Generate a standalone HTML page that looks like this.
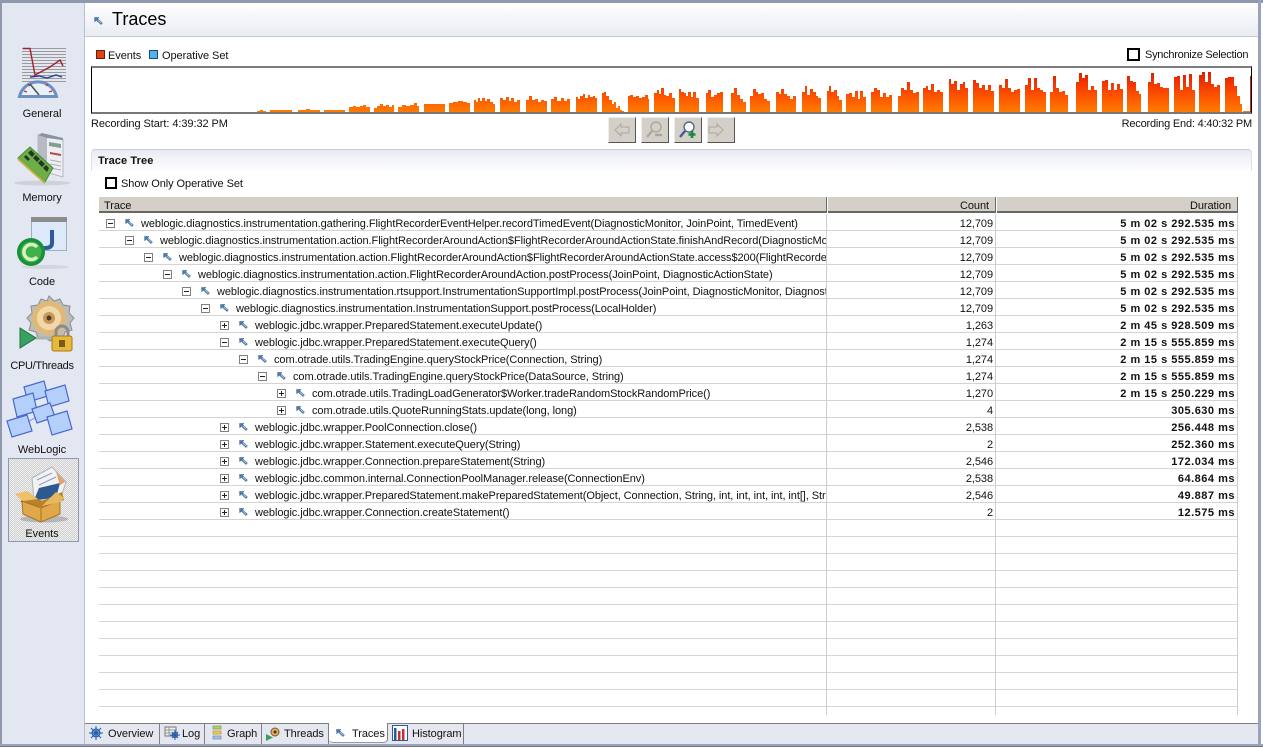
<!DOCTYPE html>
<html><head><meta charset="utf-8"><title>Traces</title>
<style>
html,body{margin:0;padding:0;background:#fff}
#p{position:relative;width:1263px;height:747px;overflow:hidden;background:#fff;font:11px/14px "Liberation Sans",sans-serif;color:#111;letter-spacing:-.07px}
#p div,#p svg{position:absolute}
.t{white-space:nowrap}
.l{width:84px;left:0;text-align:center;height:14px}
.r{left:99px;width:1138px;height:16px;border-bottom:1px solid #d4d4d4}
.r svg{margin:2px 0 0 1px}
.n{left:0;top:3px;width:727px;height:14px;overflow:hidden;white-space:nowrap}
.n span{position:absolute;top:0;white-space:nowrap}
.c{right:244px;top:3px;width:160px;text-align:right}
.d{right:2px;top:3px;width:230px;text-align:right;font-weight:bold;letter-spacing:.5px}
.b{width:26px;height:24px;background:#d4d0c8;border-right:1px solid #555;border-bottom:1px solid #555;border-top:1px solid #eee;border-left:1px solid #eee}
.x{width:7px;height:7px;border:1px solid #808080;background:#fff;top:5px}
.x:before{content:"";position:absolute;left:1px;top:3px;width:5px;height:1px;background:#222}
.x.p:after{content:"";position:absolute;left:3px;top:1px;width:1px;height:5px;background:#222}
.tb{top:723px;height:21px;border-top:1px solid #808080;border-right:1px solid #808080;background:#e4e7ef;box-sizing:border-box}
.tb b{position:absolute;top:3px;font-weight:normal;white-space:nowrap}
</style></head><body><div id="p">

<svg width="0" height="0" style="left:0;top:0"><defs>
<symbol id="ar" viewBox="0 0 9 8"><path d="M0.5 0.5H5L3.7 1.8 8.5 6 7 7.6 2.3 3.2 0.8 4.8Z" fill="#4f7cae" stroke="#2c5688" stroke-width=".5"/><path d="M4 3l3.5 3.2" stroke="#a9c3df" stroke-width="1"/></symbol>
<linearGradient id="og" gradientUnits="userSpaceOnUse" x1="0" y1="72" x2="0" y2="113"><stop offset="0" stop-color="#e41c00"/><stop offset=".5" stop-color="#fb4a00"/><stop offset="1" stop-color="#ff7f00"/></linearGradient>
</defs></svg>

<!-- window chrome -->
<div style="left:0;top:0;width:1263px;height:3px;background:#8f98ac"></div>
<div style="left:0;top:0;width:2px;height:747px;background:#8f98ac"></div>
<div style="left:2px;top:3px;width:82px;height:741px;background:#e3e7f1"></div>
<div style="left:84px;top:3px;width:1px;height:741px;background:#b9bfcc"></div>

<!-- header -->
<div style="left:85px;top:3px;width:1173px;height:33px;background:linear-gradient(#fff,#e9ecf3);border-bottom:1px solid #c3c8d4"></div>
<svg style="left:94px;top:17px" width="9" height="8"><use href="#ar"/></svg>
<div class="t" style="left:112px;top:9px;font-size:18px;line-height:20px;color:#000;letter-spacing:0">Traces</div>

<!-- legend -->
<div style="left:96px;top:50px;width:7px;height:7px;background:#e8400c;border:1px solid #5a2010"></div>
<div class="t" style="left:108px;top:49px">Events</div>
<div style="left:149px;top:50px;width:7px;height:7px;background:#4fb4ee;border:1px solid #1f4a70"></div>
<div class="t" style="left:162px;top:49px">Operative Set</div>
<div style="left:1127px;top:48px;width:9px;height:9px;border:2px solid #000;background:#fff"></div>
<div class="t" style="left:1145px;top:48px;letter-spacing:-.27px">Synchronize Selection</div>

<!-- chart -->
<svg style="left:0;top:0" width="1263" height="120"><path fill="url(#og)" d="
M254 113V112h3V111h3V110h3V111h3V113Z
M270 113V110h22V113Z
M298 113V110h8V109h4V110h10V113Z
M324 113V110h21V113Z
M349 113V107h4V106h3V107h4V106h3V105h3V107h4V113Z
M374 113V108h3V106h3V104h3V106h3V105h3V107h3V105h2V113Z
M398 113V107h4V105h4V106h4V105h4V103h3V106h2V113Z
M424 113V104h21V113Z
M449 113V103h4V102h5V101h5V102h4V103h3V113Z
M474 113V100h2V102h2V98h2V101h2V98h3V101h2V99h3V102h3V104h2V113Z
M500 113V98h3V100h3V97h3V101h2V98h3V102h3V100h3V113Z
M526 113V100h3V96h3V100h3V99h3V102h3V100h3V101h3V113Z
M551 113V99h3V97h3V101h4V98h3V101h3V99h3V113Z
M576 113V97h2V99h2V96h3V94h2V98h3V95h2V97h3V96h2V98h2V113Z
M602 113V93h2V92h2V96h3V100h3V104h2V102h2V108h2V106h2V110h2V111h2V113Z
M628 113V96h2V95h3V97h3V96h3V98h3V97h3V95h3V99h1V113Z
M654 113V93h3V90h2V94h2V88h3V95h2V96h3V93h3V98h3V113Z
M679 113V89h2V92h3V93h2V96h2V92h3V97h2V92h3V98h3V113Z
M706 113V93h2V90h3V97h3V95h3V93h3V92h3V113Z
M731 113V93h3V88h3V95h3V99h3V102h3V113Z
M750 113V96h3V89h3V92h2V94h3V93h3V99h3V101h3V113Z
M776 113V92h3V94h2V89h3V94h3V96h3V99h3V96h3V113Z
M802 113V92h3V86h2V95h3V89h3V92h3V96h2V98h3V113Z
M827 113V91h2V86h2V92h3V90h3V96h2V100h3V113Z
M846 113V94h3V93h3V97h3V91h3V99h2V91h3V97h3V113Z
M871 113V92h3V88h3V90h3V97h3V93h3V97h3V95h3V113Z
M898 113V96h3V88h3V90h3V82h3V90h3V93h3V92h3V113Z
M923 113V88h3V86h2V90h3V84h3V92h3V90h3V92h3V113Z
M949 113V79h2V84h3V81h3V90h3V84h3V82h2V88h3V113Z
M973 113V80h3V83h3V88h3V85h3V90h3V85h3V91h3V113Z
M999 113V85h3V88h3V79h3V88h3V92h3V90h3V89h3V113Z
M1025 113V85h3V78h3V90h3V78h3V88h3V90h3V92h3V113Z
M1050 113V92h3V76h3V88h3V92h3V91h3V95h3V113Z
M1076 113V82h3V73h3V78h3V75h3V90h3V86h3V90h3V113Z
M1102 113V81h3V80h3V90h3V83h3V90h3V84h3V89h3V113Z
M1127 113V76h3V81h3V82h3V91h3V94h2V113Z
M1148 113V82h3V73h3V84h3V83h3V87h3V88h3V88h3V113Z
M1174 113V77h3V76h3V90h3V75h3V87h3V74h3V90h3V113Z
M1199 113V75h3V72h3V82h3V72h3V84h3V87h3V85h3V113Z
M1225 113V78h3V77h3V77h3V86h3V96h3V104h2V113Z
M1243 113V111h7V113Z"/><rect x="1250" y="76" width="1.5" height="37" fill="#c42a10"/></svg>
<div style="left:91px;top:66px;width:1159px;height:44px;border-top:2px solid #7d7d7d;border-bottom:2px solid #777;border-left:1px solid #000;border-right:1px solid #000"></div>

<div class="t" style="left:91px;top:117px">Recording Start: 4:39:32 PM</div>
<div class="t" style="right:11px;top:117px;letter-spacing:-.19px">Recording End: 4:40:32 PM</div>

<!-- buttons -->
<div class="b" style="left:608px;top:117px"></div>
<div class="b" style="left:641px;top:117px"></div>
<div class="b" style="left:674px;top:117px"></div>
<div class="b" style="left:707px;top:117px"></div>
<svg style="left:608px;top:117px" width="130" height="27" fill="none">
<path d="M7 13l6-6v3h8v6h-8v3z" stroke="#aca9a2"/>
<path d="M112 13l-6-6v3h-8v6h8v3z" stroke="#aca9a2" transform="translate(3 0)"/>
<circle cx="48" cy="10" r="5" stroke="#aca9a2" stroke-width="1.4"/><path d="M44 14l-5 6" stroke="#aca9a2" stroke-width="2.4"/><path d="M47 18h7" stroke="#a8a59e" stroke-width="2.4"/>
<circle cx="81" cy="10" r="5" fill="#fff" stroke="#54678c" stroke-width="1.4"/><path d="M77 14l-5 6" stroke="#3f5d94" stroke-width="2.4"/><path d="M84 14v7M80.500 17.500h7" stroke="#168a3a" stroke-width="2.6"/>
</svg>

<!-- trace tree section -->
<div style="left:91px;top:149px;width:1159px;height:21px;background:linear-gradient(#e8ebf2,#fafbfc 85%,#fff);border-top:1px solid #c3c8d4;border-left:1px solid #dde0e8;border-right:1px solid #dde0e8;border-radius:4px 4px 0 0"></div>
<div class="t" style="left:98px;top:154px;font-weight:bold;letter-spacing:.1px">Trace Tree</div>
<div style="left:105px;top:177px;width:8px;height:8px;border:2px solid #000;background:#fff"></div>
<div class="t" style="left:121px;top:177px">Show Only Operative Set</div>

<!-- table header -->
<div style="left:99px;top:197px;width:1138px;height:14px;background:#d4d0c8;border-bottom:2px solid #666"></div>
<div style="left:826px;top:197px;width:1px;height:16px;background:#666"></div><div style="left:827px;top:197px;width:1px;height:16px;background:#fff"></div>
<div style="left:995px;top:197px;width:1px;height:16px;background:#666"></div><div style="left:996px;top:197px;width:1px;height:16px;background:#fff"></div>
<div style="left:1237px;top:197px;width:1px;height:16px;background:#666"></div>
<div class="t" style="left:104px;top:199px">Trace</div>
<div class="t" style="right:274px;top:199px">Count</div>
<div class="t" style="right:32px;top:199px">Duration</div>

<!-- rows -->
<div class="r" style="top:214px"><div class="n"><span style="left:42px">weblogic.diagnostics.instrumentation.gathering.FlightRecorderEventHelper.recordTimedEvent(DiagnosticMonitor, JoinPoint, TimedEvent)</span></div><div class="x" style="left:7px"></div><svg style="left:25px;top:3px" width="9" height="8"><use href="#ar"/></svg><div class="c">12,709</div><div class="d">5 m 02 s 292.535 ms</div></div>
<div class="r" style="top:231px"><div class="n"><span style="left:61px">weblogic.diagnostics.instrumentation.action.FlightRecorderAroundAction$FlightRecorderAroundActionState.finishAndRecord(DiagnosticMonitor, JoinPoint)</span></div><div class="x" style="left:26px"></div><svg style="left:44px;top:3px" width="9" height="8"><use href="#ar"/></svg><div class="c">12,709</div><div class="d">5 m 02 s 292.535 ms</div></div>
<div class="r" style="top:248px"><div class="n"><span style="left:80px">weblogic.diagnostics.instrumentation.action.FlightRecorderAroundAction$FlightRecorderAroundActionState.access$200(FlightRecorderAroundAction)</span></div><div class="x" style="left:45px"></div><svg style="left:63px;top:3px" width="9" height="8"><use href="#ar"/></svg><div class="c">12,709</div><div class="d">5 m 02 s 292.535 ms</div></div>
<div class="r" style="top:265px"><div class="n"><span style="left:99px">weblogic.diagnostics.instrumentation.action.FlightRecorderAroundAction.postProcess(JoinPoint, DiagnosticActionState)</span></div><div class="x" style="left:64px"></div><svg style="left:82px;top:3px" width="9" height="8"><use href="#ar"/></svg><div class="c">12,709</div><div class="d">5 m 02 s 292.535 ms</div></div>
<div class="r" style="top:282px"><div class="n"><span style="left:118px">weblogic.diagnostics.instrumentation.rtsupport.InstrumentationSupportImpl.postProcess(JoinPoint, DiagnosticMonitor, DiagnosticAction)</span></div><div class="x" style="left:83px"></div><svg style="left:101px;top:3px" width="9" height="8"><use href="#ar"/></svg><div class="c">12,709</div><div class="d">5 m 02 s 292.535 ms</div></div>
<div class="r" style="top:299px"><div class="n"><span style="left:137px">weblogic.diagnostics.instrumentation.InstrumentationSupport.postProcess(LocalHolder)</span></div><div class="x" style="left:102px"></div><svg style="left:120px;top:3px" width="9" height="8"><use href="#ar"/></svg><div class="c">12,709</div><div class="d">5 m 02 s 292.535 ms</div></div>
<div class="r" style="top:316px"><div class="n"><span style="left:156px">weblogic.jdbc.wrapper.PreparedStatement.executeUpdate()</span></div><div class="x p" style="left:121px"></div><svg style="left:139px;top:3px" width="9" height="8"><use href="#ar"/></svg><div class="c">1,263</div><div class="d">2 m 45 s 928.509 ms</div></div>
<div class="r" style="top:333px"><div class="n"><span style="left:156px">weblogic.jdbc.wrapper.PreparedStatement.executeQuery()</span></div><div class="x" style="left:121px"></div><svg style="left:139px;top:3px" width="9" height="8"><use href="#ar"/></svg><div class="c">1,274</div><div class="d">2 m 15 s 555.859 ms</div></div>
<div class="r" style="top:350px"><div class="n"><span style="left:175px">com.otrade.utils.TradingEngine.queryStockPrice(Connection, String)</span></div><div class="x" style="left:140px"></div><svg style="left:158px;top:3px" width="9" height="8"><use href="#ar"/></svg><div class="c">1,274</div><div class="d">2 m 15 s 555.859 ms</div></div>
<div class="r" style="top:367px"><div class="n"><span style="left:194px">com.otrade.utils.TradingEngine.queryStockPrice(DataSource, String)</span></div><div class="x" style="left:159px"></div><svg style="left:177px;top:3px" width="9" height="8"><use href="#ar"/></svg><div class="c">1,274</div><div class="d">2 m 15 s 555.859 ms</div></div>
<div class="r" style="top:384px"><div class="n"><span style="left:213px">com.otrade.utils.TradingLoadGenerator$Worker.tradeRandomStockRandomPrice()</span></div><div class="x p" style="left:178px"></div><svg style="left:196px;top:3px" width="9" height="8"><use href="#ar"/></svg><div class="c">1,270</div><div class="d">2 m 15 s 250.229 ms</div></div>
<div class="r" style="top:401px"><div class="n"><span style="left:213px">com.otrade.utils.QuoteRunningStats.update(long, long)</span></div><div class="x p" style="left:178px"></div><svg style="left:196px;top:3px" width="9" height="8"><use href="#ar"/></svg><div class="c">4</div><div class="d">305.630 ms</div></div>
<div class="r" style="top:418px"><div class="n"><span style="left:156px">weblogic.jdbc.wrapper.PoolConnection.close()</span></div><div class="x p" style="left:121px"></div><svg style="left:139px;top:3px" width="9" height="8"><use href="#ar"/></svg><div class="c">2,538</div><div class="d">256.448 ms</div></div>
<div class="r" style="top:435px"><div class="n"><span style="left:156px">weblogic.jdbc.wrapper.Statement.executeQuery(String)</span></div><div class="x p" style="left:121px"></div><svg style="left:139px;top:3px" width="9" height="8"><use href="#ar"/></svg><div class="c">2</div><div class="d">252.360 ms</div></div>
<div class="r" style="top:452px"><div class="n"><span style="left:156px">weblogic.jdbc.wrapper.Connection.prepareStatement(String)</span></div><div class="x p" style="left:121px"></div><svg style="left:139px;top:3px" width="9" height="8"><use href="#ar"/></svg><div class="c">2,546</div><div class="d">172.034 ms</div></div>
<div class="r" style="top:469px"><div class="n"><span style="left:156px">weblogic.jdbc.common.internal.ConnectionPoolManager.release(ConnectionEnv)</span></div><div class="x p" style="left:121px"></div><svg style="left:139px;top:3px" width="9" height="8"><use href="#ar"/></svg><div class="c">2,538</div><div class="d">64.864 ms</div></div>
<div class="r" style="top:486px"><div class="n"><span style="left:156px">weblogic.jdbc.wrapper.PreparedStatement.makePreparedStatement(Object, Connection, String, int, int, int, int, int[], String[])</span></div><div class="x p" style="left:121px"></div><svg style="left:139px;top:3px" width="9" height="8"><use href="#ar"/></svg><div class="c">2,546</div><div class="d">49.887 ms</div></div>
<div class="r" style="top:503px"><div class="n"><span style="left:156px">weblogic.jdbc.wrapper.Connection.createStatement()</span></div><div class="x p" style="left:121px"></div><svg style="left:139px;top:3px" width="9" height="8"><use href="#ar"/></svg><div class="c">2</div><div class="d">12.575 ms</div></div>

<!-- empty row lines and column lines -->
<svg style="left:99px;top:210px" width="1140" height="506">
<path stroke="#d8d8d2" fill="none" d="M0 326.500H1138M0 343.500H1138M0 360.500H1138M0 377.500H1138M0 394.500H1138M0 411.500H1138M0 428.500H1138M0 445.500H1138M0 462.500H1138M0 479.500H1138M0 496.500H1138"/>
<path stroke="#cfcfc9" fill="none" d="M727.500 4V505M896.500 4V505M1138.500 4V505"/>
</svg>

<!-- sidebar icons (absolute page coordinates) -->
<svg style="left:0;top:0" width="84" height="560">
<!-- General -->
<path stroke="#9a9a9a" fill="none" d="M22 48.500H66M22 51.500H66M22 54.500H66M22 57.500H66M22 60.500H66M22 63.500H66M22 66.500H66M22 69.500H66M22 72.500H66M22 75.500H66M22 78.500H66M22 81.500H66"/>
<path d="M23 48.500H30L35 75 50 67 60 60 63 66" fill="none" stroke="#a5202a" stroke-width="1.400"/>
<path d="M30 77l9-1 8 2 9-3 6 2" fill="none" stroke="#2a3f9a" stroke-width="1.400"/>
<path d="M19.500 96.500A19 19 0 0 1 56.500 96.500Z" fill="#e8f0fa" stroke="#6d90c4" stroke-width="3"/>
<path d="M30 84l9 11" stroke="#555" stroke-width="1.600"/>
<path d="M24 91l3 1M28 84l2 2M48 84l-2 2M52 91l-3 1" stroke="#b33" stroke-width="1.200"/>
<!-- Memory -->
<ellipse cx="42" cy="183" rx="28" ry="2.500" fill="#cdd1da"/>
<path d="M38 135L63 140V177L38 170Z" fill="#eceef2" stroke="#b4b9c3"/><path d="M38 135L47 138V173L38 170Z" fill="#b6bbc6"/><path d="M38 135L42 133 63 138V140L47 138Z" fill="#8d929c"/>
<path d="M49 142l12 2v4l-12-2z" fill="#7ea08c"/><path d="M50 152l11 2v2l-11-2z" fill="#b44"/><path d="M50 160l11 2M50 164l11 2M50 168l11 2" stroke="#aab0ba" fill="none"/>
<path d="M30 147L18 158 45 182 53 168Z" fill="#6cae48" stroke="#4a8a32"/>
<path d="M18 159L45 183" stroke="#c8b040" stroke-width="2"/>
<path d="M28 153l3-3 4 4-3 3zM33 158l3-3 4 4-3 3zM38 163l3-3 4 4-3 3zM43 168l3-3 3 3-2 4zM24 157l2-2 4 4-2 2z" fill="#1f3a20"/>
<!-- Code -->
<ellipse cx="45" cy="267" rx="24" ry="2" fill="#d2d6de"/>
<rect x="31.500" y="217.500" width="35" height="33" fill="#dbe9fa" stroke="#a4acb8"/>
<rect x="31" y="217" width="36" height="5" fill="#8c8c8c"/>
<path d="M52 230V243Q52 248 45 248H40" fill="none" stroke="#2c5a9c" stroke-width="4"/>
<circle cx="31" cy="252" r="14" fill="#18913c"/><circle cx="31" cy="252" r="10.500" fill="#3fb04a"/>
<path d="M37 247a7.500 7.500 0 1 0 0 10" fill="none" stroke="#dcf2bc" stroke-width="3.500"/>
<!-- CPU/Threads -->
<path d="M49 296l5 5 6-2 3 6 7 1-1 7 5 5-4 5 2 7-7 2-2 6-7-1-6 4-6-4-6 1-2-6-7-2 2-7-4-5 5-5-1-7 7-1 3-6 6 2z" fill="#bdbcb8" stroke="#8e8d88"/>
<circle cx="49" cy="318" r="17" fill="#e0b878"/><circle cx="49" cy="318" r="12" fill="#f2d8a8"/><circle cx="49" cy="318" r="6" fill="#c89858"/><circle cx="49" cy="318" r="2.500" fill="#4a3a2a"/>
<path d="M20 328V348L36 338Z" fill="#38a060" stroke="#1f7040"/>
<path d="M36 338H54" stroke="#b0b0b0" stroke-width="3"/>
<path d="M56 336v-4a6 6 0 0 1 12 0v4" fill="none" stroke="#8c8c8c" stroke-width="3"/>
<rect x="52" y="336" width="20" height="15" rx="2" fill="#e8b838" stroke="#a87818"/><rect x="59" y="340" width="6" height="7" fill="#7a5a18"/>
<!-- WebLogic -->
<path d="M36 392L57 396M25 408L44 413M44 413L20 426M44 413L60 423M38 392L25 408M57 396L44 413" stroke="#7f9ae0" fill="none"/>
<g fill="#b4d0fa" stroke="#4a68d0" stroke-width="1.200">
<path d="M24 387L44 381 48 396 28 402Z"/>
<path d="M45 391L65 385 69 401 49 407Z"/>
<path d="M13 399L33 393 37 411 17 417Z"/>
<path d="M32 409L50 403 55 417 37 423Z"/>
<path d="M7 421L27 415 32 431 12 437Z"/>
<path d="M47 417L67 411 72 429 52 435Z"/>
</g>
</svg>
<div class="l t" style="top:107px">General</div>
<div class="l t" style="top:191px">Memory</div>
<div class="l t" style="top:275px">Code</div>
<div class="l t" style="top:359px;letter-spacing:-.3px">CPU/Threads</div>
<div class="l t" style="top:443px">WebLogic</div>

<div style="left:8px;top:458px;width:69px;height:82px;border:1px solid #8f98ac;background:repeating-conic-gradient(#cfcfcf 0 25%,#f0f0f0 0 50%) 0 0/2px 2px"></div>
<svg style="left:14px;top:464px" width="58" height="60">
<ellipse cx="30" cy="55" rx="24" ry="3.500" fill="#777" opacity=".4"/>
<path d="M18 14L38 3 52 18 46 36 20 36Z" fill="#f2f2f4" stroke="#b0b0b8"/>
<path d="M23 16L38 9M25 21L42 13" stroke="#88a0c0"/><path d="M20 36L25 24 46 19 42 34Z" fill="#2c5a90"/>
<path d="M42 8l9 10-5 3z" fill="#e8a060"/>
<path d="M13 30L28 37 48 28 50 36 30 44 6 38Z" fill="#b98228"/>
<path d="M8 37L27 44 46 36V50L27 58 9 50Z" fill="#e0a848" stroke="#a87420"/>
<path d="M27 44V58" stroke="#a87420"/><path d="M9 37L1 30 13 27 24 35Z" fill="#f0c068"/><path d="M28 42L42 28 50 34 46 38Z" fill="#e8b860"/>
</svg>
<div class="l t" style="top:527px">Events</div>

<!-- tab bar -->
<div style="left:85px;top:723px;width:1173px;height:21px;background:#e4e7ef;border-top:1px solid #808080;box-sizing:border-box"></div>
<div class="tb" style="left:85px;width:75px"><b style="left:23px">Overview</b></div>
<div class="tb" style="left:160px;width:45px"><b style="left:22px">Log</b></div>
<div class="tb" style="left:205px;width:57px"><b style="left:22px">Graph</b></div>
<div class="tb" style="left:262px;width:67px"><b style="left:22px">Threads</b></div>
<div class="tb" style="left:329px;width:59px;background:#fff;border-top:none;height:20px;border-radius:0 0 4px 4px;border-bottom:1px solid #9a9a9a"><b style="left:23px;top:4px">Traces</b></div>
<div class="tb" style="left:388px;width:76px"><b style="left:24px">Histogram</b></div>

<svg style="left:85px;top:723px" width="385" height="20" fill="none">
<circle cx="11" cy="10" r="4" fill="#7fb0e8" stroke="#1f5aa8"/><path d="M11 3v14M4 10h14M6 5l10 10M16 5L6 15" stroke="#1f5aa8"/>
<rect x="80" y="4" width="11" height="9" fill="#eee" stroke="#777"/><path d="M80 7h11M80 10h11M84 4v9" stroke="#999"/><circle cx="90" cy="12" r="2.500" fill="#7fb0e8" stroke="#1f5aa8"/><path d="M90 7v10M85 12h10M87 9l6 6M93 9l-6 6" stroke="#1f5aa8"/>
<rect x="128" y="3" width="8" height="3" fill="#b4cc78" stroke="#7a9a48" stroke-width=".7"/><rect x="128" y="8" width="8" height="3" fill="#f0c850" stroke="#b89830" stroke-width=".7"/><rect x="128" y="13" width="8" height="3" fill="#a8c4e8" stroke="#6888b8" stroke-width=".7"/>
<path d="M181 11v7l7-3.500z" fill="#38a060"/><circle cx="190" cy="9" r="4" fill="#e0b060" stroke="#7a5a20"/><circle cx="190" cy="9" r="1.500" fill="#432"/>
<svg x="251" y="6" width="9" height="8" viewBox="0 0 9 8"><use href="#ar"/></svg>
<rect x="307.500" y="2.500" width="15" height="15" fill="#fff" stroke="#2a5a9a"/><rect x="309" y="5" width="2.500" height="12" fill="#2a5a9a"/><rect x="313" y="8" width="2.500" height="9" fill="#c83030"/><rect x="317" y="6" width="2.500" height="11" fill="#c83030"/>
</svg>

<!-- outer chrome on top -->
<div style="left:1258px;top:0;width:3px;height:747px;background:#98a2bc"></div>
<div style="left:0;top:744px;width:1263px;height:2px;background:#98a2bc"></div>
<div style="left:0;top:746px;width:1263px;height:1px;background:#777"></div>

</div></body></html>
